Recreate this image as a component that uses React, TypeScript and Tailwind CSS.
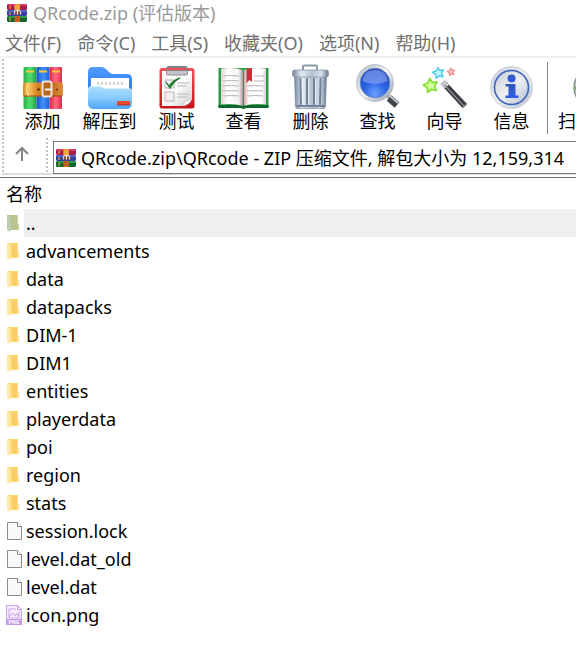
import type { ReactNode } from 'react';

function ArchiveIcon({ className }: { className: string }) {
  return (
    <svg className={className} viewBox="0 0 40 42" preserveAspectRatio="none" aria-hidden="true">
      <defs>
        <linearGradient id="bookGreen">
          <stop offset="0" stopColor="#2fae4a" />
          <stop offset=".5" stopColor="#4fe070" />
          <stop offset="1" stopColor="#1f9f40" />
        </linearGradient>
        <linearGradient id="bookBlue">
          <stop offset="0" stopColor="#1d50c8" />
          <stop offset=".5" stopColor="#3f94fa" />
          <stop offset="1" stopColor="#2560dc" />
        </linearGradient>
        <linearGradient id="bookRed">
          <stop offset="0" stopColor="#e02446" />
          <stop offset=".5" stopColor="#ff6f7f" />
          <stop offset="1" stopColor="#dc2a4a" />
        </linearGradient>
        <linearGradient id="strap">
          <stop offset="0" stopColor="#d98a2c" />
          <stop offset=".15" stopColor="#f7c660" />
          <stop offset=".35" stopColor="#d98425" />
          <stop offset=".7" stopColor="#c06a1c" />
          <stop offset="1" stopColor="#de8f3a" />
        </linearGradient>
      </defs>
      <rect x="0.5" width="13" height="42" rx="1" fill="url(#bookGreen)" />
      <rect x="13.5" width="13" height="42" rx="1" fill="url(#bookBlue)" />
      <rect x="26.5" width="12.5" height="42" rx="1" fill="url(#bookRed)" />
      <path d="M3 4.5h8M16 4.5h8M29 4.5h8" stroke="#f7c744" strokeWidth="2" />
      <rect y="15.500" width="40" height="14" rx="2" fill="url(#strap)" />
      <path d="M1 29h38" stroke="#8f4a12" strokeWidth="1" />
      <path d="M5.500 16q-4 6.500 0 13" fill="none" stroke="#ffe49a" strokeWidth="1.200" />
      <rect x="19.500" y="14.500" width="9" height="15" rx="2" fill="#b8691f" stroke="#e9e4dc" strokeWidth="2" />
      <path d="M22 22.500h6" stroke="#f7f7f7" strokeWidth="2" />
      <circle cx="15.500" cy="22.500" r="1.200" fill="#4b2507" />
      <circle cx="34" cy="22.500" r="1" fill="#6d390d" />
    </svg>
  );
}

function StackIcon({ className }: { className: string }) {
  return (
    <svg className={className} viewBox="0 0 20 18" aria-hidden="true">
      <path d="M1 0h18l1 1v4l-1 1H1L0 5V1z" fill="#a81c4c" />
      <path d="M2 0h17l1 1v1H1z" fill="#d33a63" />
      <path d="M1 6h18l1 1v4l-1 1H1l-1-1V7z" fill="#3a3f9c" />
      <path d="M2 6h17l1 1v1H1z" fill="#5563c8" />
      <path d="M1 12h18l1 1v4l-1 1H1l-1-1v-4z" fill="#14652d" />
      <path d="M2 12h17l1 1v1H1z" fill="#2c9a4b" />
      <path d="M3 2v3M3 8v3M3 14v3" fill="none" stroke="#f3b52c" strokeWidth="1.100" />
      <path d="M7.500 0h5.500v7h-5.500zM7.500 12h5.500v6H7.500z" fill="#c86a22" />
      <path d="M7.500 1q2.500-2 5.500 0v5H7.500z" fill="#efa53c" />
      <path d="M7.500 10.500v-3q3-2.500 6 0v3" fill="#8a3f1c" stroke="#d3d7df" strokeWidth="1.200" />
      <path d="M10.500 6v4.500" stroke="#fff" strokeWidth="1.200" />
      <path d="M8 13.500h4.500M8 16h4.500" stroke="#9a4d16" strokeWidth=".800" />
    </svg>
  );
}

function ExtractIcon() {
  return (
    <svg className="h-[43px] w-[46px]" viewBox="0 0 46 43" aria-hidden="true">
      <defs>
        <linearGradient id="folderBack" x2="0" y2="1">
          <stop offset="0" stopColor="#4f9dff" />
          <stop offset="1" stopColor="#2869ee" />
        </linearGradient>
        <linearGradient id="folderFront" x2="0" y2="1">
          <stop offset="0" stopColor="#a9defe" />
          <stop offset=".5" stopColor="#8accfc" />
          <stop offset="1" stopColor="#4fa4f6" />
        </linearGradient>
      </defs>
      <path d="M1 6q0-5 5-5h8q3 0 5 2l3 3q2 2 4 2h14q5 0 5 5v20H1z" fill="url(#folderBack)" />
      <path d="M4 12h38v14H4z" fill="#fff" />
      <path d="M11 16v3m4-3v3m4-3v3m4-3v3m4-3v3m4-3v3m4-3v3" stroke="#c4c4c4" strokeWidth="1.500" />
      <path d="M1 24q0-4 4-4h7q2 0 3 1t3 1h23q4 0 4 4v11q0 6-6 6H7q-6 0-6-6z" fill="url(#folderFront)" />
      <path d="M1.500 24q0-3 3-3.500h7q2 0 3.500 1t3 1h23q3 0 4 3" fill="none" stroke="#d6f0ff" />
      <rect x="30" y="35" width="13" height="4" rx="1" fill="#ef4a27" />
      <path d="M30 39h13" stroke="#9e3038" />
    </svg>
  );
}

function TestIcon() {
  return (
    <svg className="h-[43px] w-[36px]" viewBox="0 0 36 43" aria-hidden="true">
      <defs>
        <linearGradient id="board" x2="0" y2="1">
          <stop offset="0" stopColor="#ee5257" />
          <stop offset="1" stopColor="#c4141b" />
        </linearGradient>
        <linearGradient id="sheet" x2="1" y2="1">
          <stop offset=".5" stopColor="#fcfcfc" />
          <stop offset="1" stopColor="#cfcfcf" />
        </linearGradient>
      </defs>
      <rect x=".500" y="2" width="35" height="40.500" rx="2.500" fill="url(#board)" />
      <path d="M3 5h30v28q-2 6-9 7H3z" fill="url(#sheet)" />
      <path d="M33 32q-5 4-7 3 0 3-4 5 9-1 11-8z" fill="#fff" stroke="#b9b9b9" strokeWidth=".600" />
      <path d="M8 5V3q0-2 2-2h16q2 0 2 2v2" fill="none" stroke="#7e8287" strokeWidth="1.800" />
      <rect x="7.500" y="4.500" width="21" height="4.500" rx="1" fill="#c3c6ca" stroke="#777a80" strokeWidth=".800" />
      <path d="M6 14h9v8H6zM6 26h9v9H6z" fill="#f1f1f1" stroke="#b4b4b4" />
      <path d="M7 16l3 4q4-6 11-8-6 3-10 10z" fill="#238a35" stroke="#1d7b2d" strokeWidth="1.200" />
      <path d="M18 17h12M18 20h10M18 28h12M18 31h10" stroke="#b7b7b7" />
    </svg>
  );
}

function ViewIcon() {
  return (
    <svg className="h-[43px] w-[51px]" viewBox="0 0 51 43" aria-hidden="true">
      <defs>
        <linearGradient id="pageLeft">
          <stop offset="0" stopColor="#d9d9d9" />
          <stop offset=".3" stopColor="#fff" />
          <stop offset=".8" stopColor="#f4f4f4" />
          <stop offset="1" stopColor="#9d9d9d" />
        </linearGradient>
        <linearGradient id="pageRight">
          <stop offset="0" stopColor="#b3b3b3" />
          <stop offset=".2" stopColor="#fafafa" />
          <stop offset=".8" stopColor="#fff" />
          <stop offset="1" stopColor="#d5d5d5" />
        </linearGradient>
      </defs>
      <path d="M.500 2h50v40H28q-2.500 1.500-5 0H.500z" fill="#2b9a42" />
      <path d="M.500 39h50v3H28q-2.500 1.500-5 0H.500z" fill="#0f672a" />
      <path d="M3 2.500Q16 1 25 4v36Q16 37 3 38.500z" fill="url(#pageLeft)" />
      <path d="M48 2.500Q35 1 26 4v36q9-3 22-1.500z" fill="url(#pageRight)" />
      <path d="M5 10q9-1 16 0M5 15q9-1 16 0M5 20q9-1 16 0M5 25q9-1 16 0M5 30q9-1 16 0M29 20q9-1 16 0M29 25q9-1 16 0M29 30q9-1 16 0M36 10h10M36 15h10" fill="none" stroke="#b5b5b5" />
      <path d="M28.500 3q3-1 5.500-1v14l-2.500-2-3 3z" fill="#c92d35" />
    </svg>
  );
}

function DeleteIcon() {
  return (
    <svg className="h-[45px] w-[37px]" viewBox="0 0 37 45" aria-hidden="true">
      <defs>
        <linearGradient id="can">
          <stop offset="0" stopColor="#75879e" />
          <stop offset=".25" stopColor="#e3eaf1" />
          <stop offset=".55" stopColor="#b3c0cf" />
          <stop offset=".8" stopColor="#d7e0e9" />
          <stop offset="1" stopColor="#64778f" />
        </linearGradient>
      </defs>
      <path d="M11 6V2.500q0-1 1-1h12q1 0 1 1V6" fill="none" stroke="#8c9aaa" strokeWidth="2" />
      <path d="M2.500 12h32l-1 30q0 2.500-2.500 2.500H6q-2.500 0-2.500-2.500z" fill="url(#can)" stroke="#6d7e93" strokeWidth=".600" />
      <path d="M8.500 15l.500 25M15 15v25M22 15v25M28.500 15L28 40" stroke="#708196" strokeWidth="2" strokeLinecap="round" />
      <path d="M10 15l.500 25M16.500 15v25M23.500 15v25" stroke="#eef3f7" strokeWidth=".800" />
      <path d="M5 42h27" stroke="#596a7f" strokeWidth="1.500" />
      <rect x=".500" y="6" width="36" height="7" rx="2" fill="url(#can)" stroke="#8191a4" strokeWidth=".700" />
    </svg>
  );
}

function FindIcon() {
  return (
    <svg className="h-[45px] w-[46px]" viewBox="0 0 46 45" aria-hidden="true">
      <defs>
        <radialGradient id="lens" cx=".5" cy=".85" r=".85">
          <stop offset="0" stopColor="#6ea2ff" />
          <stop offset=".45" stopColor="#2b64e6" />
          <stop offset="1" stopColor="#2448b8" />
        </radialGradient>
        <linearGradient id="rim" x2="1" y2="1">
          <stop offset="0" stopColor="#a8b2bd" />
          <stop offset=".5" stopColor="#f3f5f7" />
          <stop offset="1" stopColor="#8b97a5" />
        </linearGradient>
      </defs>
      <path d="M31 30l4 4" stroke="#a6adb5" strokeWidth="4" />
      <path d="M34 34l8 7" stroke="#41454c" strokeWidth="7" />
      <path d="M35 32l8 7" stroke="#c5c8cc" strokeWidth="2" />
      <circle cx="20" cy="19" r="18.500" fill="url(#rim)" stroke="#a2abb5" strokeWidth=".600" />
      <circle cx="20" cy="19" r="14.800" fill="url(#lens)" stroke="#6c83b5" strokeWidth=".700" />
      <path d="M7.500 17Q9 6 20 6t12.500 11Q20 23 7.500 17z" fill="#c2d3ff" fillOpacity=".4" />
    </svg>
  );
}

function WizardIcon() {
  return (
    <svg className="h-[43px] w-[45px]" viewBox="0 0 45 43" aria-hidden="true">
      <path d="M18.500 18l4.500-3.500 22 23.500-4.500 4z" fill="#393b40" />
      <path d="M18.500 18l4.500-3.500 4 4.500-4.500 3.500z" fill="#c9cbce" />
      <path d="M22.500 19l20 21.500" stroke="#8d9095" strokeWidth="1.200" />
      <path d="M40.500 41.500l4.500-4" stroke="#77797d" strokeWidth="1.500" />
      <path d="M8 12.500l2.200 4 4.800-.500-2.500 4.200 1.800 4.300-4.800-1.200-3.800 3-.400-4.800-4-2.500 4.500-1.800z" fill="#d8fb9b" stroke="#84e234" strokeWidth="1.800" strokeLinejoin="round" />
      <path d="M16 1.500l1.700 3 3.800-.600-2 3.400 1.500 3.500-3.800-1-3 2.400-.400-3.900-3.300-2 3.800-1.300z" fill="#c1f5ff" stroke="#4cccea" strokeWidth="1.500" strokeLinejoin="round" />
      <path d="M29 2l1 2.200 2.500-.200-1.500 2.200 1 2.400-2.500-.700-2 1.500-.200-2.500-2-1.400 2.400-.900z" fill="#ffc9c9" stroke="#f08484" strokeWidth="1.100" strokeLinejoin="round" />
    </svg>
  );
}

function InfoIcon() {
  return (
    <svg className="h-[43px] w-[43px]" viewBox="0 0 43 43" aria-hidden="true">
      <defs>
        <linearGradient id="disc" x2="1" y2="1">
          <stop offset="0" stopColor="#c3cad6" />
          <stop offset=".5" stopColor="#eef0f5" />
          <stop offset="1" stopColor="#b5becd" />
        </linearGradient>
        <linearGradient id="glyph" x2="0" y2="1">
          <stop offset="0" stopColor="#3359b4" />
          <stop offset="1" stopColor="#2e5df0" />
        </linearGradient>
      </defs>
      <circle cx="21.500" cy="21.500" r="21" fill="url(#disc)" stroke="#c0c7d3" strokeWidth=".700" />
      <circle cx="21.500" cy="21.500" r="17" fill="url(#disc)" stroke="#3c62b8" strokeWidth="1.600" />
      <circle cx="21.500" cy="12.500" r="4" fill="url(#glyph)" />
      <path d="M15.500 18h10v11.500h3V32h-13v-2.500h3V20.500h-3z" fill="url(#glyph)" />
    </svg>
  );
}

function ScanIcon() {
  return (
    <svg className="h-[43px] w-[43px]" viewBox="0 0 43 43" aria-hidden="true">
      <circle cx="21.500" cy="21.500" r="20.500" fill="#c5c9cc" stroke="#8b9297" strokeWidth="1.500" />
      <circle cx="21.500" cy="21.500" r="18.500" fill="#7e868b" />
      <ellipse cx="20" cy="22" rx="18" ry="9" fill="#62c322" />
    </svg>
  );
}

function FolderIcon({ up }: { up?: boolean }) {
  return (
    <svg className="ml-[7px] block h-[18px] w-3" viewBox="0 0 12 18" aria-hidden="true">
      <path d="M0 1h10.500v9H12v6H0z" fill={up ? '#b7c391' : '#ffda78'} />
      <path d="M5 1h5.500v14H5z" fill={up ? '#b9c48f' : '#f8cf66'} />
      <path d="M0 1l3.500 2.500V18L0 16z" fill={up ? '#bccfb4' : '#ffe9a7'} />
      <path d="M10 10h2v6h-2z" fill={up ? '#c3cc9c' : '#ffe08a'} />
    </svg>
  );
}

function PageIcon() {
  return (
    <svg className="ml-[7px] block h-[18px] w-[15px]" viewBox="0 0 15 18" aria-hidden="true">
      <path d="M.500.500h10l4 4v13H.500z" fill="#f8f9fa" stroke="#8b8b8b" />
      <path d="M10.500.500v4h4" fill="#fff" stroke="#8b8b8b" />
    </svg>
  );
}

function PngIcon() {
  return (
    <svg className="ml-1.5 block h-5 w-4" viewBox="0 0 16 20" aria-hidden="true">
      <path d="M.500.500h11l4 4v15H.500z" fill="#f7effd" stroke="#c9a3ea" />
      <path d="M11.500.500v4h4" fill="none" stroke="#c9a3ea" />
      <path d="M3 4h7M3 4v9h10V6" fill="none" stroke="#c9a3ea" />
      <path d="M3.500 11.500l3-3.500 2.500 2.500 2-2 2 3" fill="none" stroke="#b98be0" />
      <path d="M0 14h16v6H0z" fill="#c59be8" />
      <text x="8" y="19" textAnchor="middle" fontSize="5" fontWeight="700" fill="#fff">PNG</text>
    </svg>
  );
}

const menus = ['文件(F)', '命令(C)', '工具(S)', '收藏夹(O)', '选项(N)', '帮助(H)'];

const tools: { label: string; icon: ReactNode }[] = [
  { label: '添加', icon: <ArchiveIcon className="h-[42px] w-10" /> },
  { label: '解压到', icon: <ExtractIcon /> },
  { label: '测试', icon: <TestIcon /> },
  { label: '查看', icon: <ViewIcon /> },
  { label: '删除', icon: <DeleteIcon /> },
  { label: '查找', icon: <FindIcon /> },
  { label: '向导', icon: <WizardIcon /> },
  { label: '信息', icon: <InfoIcon /> },
];

const folders = ['advancements', 'data', 'datapacks', 'DIM-1', 'DIM1', 'entities', 'playerdata', 'poi', 'region', 'stats'];
const files = ['session.lock', 'level.dat_old', 'level.dat', 'icon.png'];

const entries: { name: string; icon: ReactNode }[] = [
  { name: '..', icon: <FolderIcon up /> },
  ...folders.map((name) => ({ name, icon: <FolderIcon /> })),
  ...files.map((name) => ({ name, icon: name.endsWith('.png') ? <PngIcon /> : <PageIcon /> })),
];

function Grip() {
  return (
    <span
      aria-hidden="true"
      className="w-0.5 shrink-0 self-stretch bg-[repeating-linear-gradient(to_bottom,#c3c3c3_0px,#c3c3c3_2px,transparent_2px,transparent_4px)]"
    />
  );
}

function ToolButton({ label, icon, wide }: { label: string; icon: ReactNode; wide?: boolean }) {
  return (
    <button
      type="button"
      className={`flex shrink-0 flex-col items-center whitespace-nowrap ${wide ? 'w-[90px]' : 'w-[67px]'}`}
    >
      <span className="flex h-[50px] items-end">{icon}</span>
      <span className="leading-6">{label}</span>
    </button>
  );
}

export default function App() {
  return (
    <main className="w-full overflow-hidden bg-white font-['Noto_Sans','Noto_Sans_CJK_SC',sans-serif] text-lg text-black">
      <header className="flex h-[26px] items-center gap-1.5 pl-[7px] text-[#999]">
        <StackIcon className="h-[18px] w-5" />
        <h1 className="whitespace-nowrap leading-6">QRcode.zip (评估版本)</h1>
      </header>

      <nav className="flex h-[32px] gap-4 border-b-2 border-[#f0f0f0] pt-1 pl-[5px] text-[#707070]">
        {menus.map((menu) => (
          <button key={menu} type="button" className="whitespace-nowrap leading-[26px]">
            {menu}
          </button>
        ))}
      </nav>

      <div className="flex h-20 items-start overflow-hidden pt-px pl-0.5">
        <Grip />
        <div className="flex pl-[5px]">
          {tools.map((tool) => (
            <ToolButton key={tool.label} label={tool.label} icon={tool.icon} />
          ))}
        </div>
        <span className="mt-[3px] mr-px ml-0.5 h-[72px] w-px shrink-0 bg-[#8a8a8a]" />
        <ToolButton label="扫描病毒" icon={<ScanIcon />} wide />
      </div>

      <div className="flex h-10 items-start border-b border-[#70737c] pl-0.5">
        <div className="flex h-[37px] w-full border-b-2 border-[#dcdcdc]">
          <Grip />
          <button type="button" aria-label="向上" className="flex w-[42px] items-center justify-center pr-1.5 pb-1">
            <svg className="h-4 w-4" viewBox="0 0 16 16" fill="none" stroke="#858585" strokeWidth="2" aria-hidden="true">
              <path d="M8 15V2M2 8l6-6 6 6" />
            </svg>
          </button>
          <Grip />
          <label className="mt-[3px] ml-[5px] flex h-[33px] grow items-center gap-[5px] border border-r-0 border-[#7a7a7a] pl-0.5">
            <StackIcon className="h-[18px] w-5 shrink-0" />
            <input
              type="text"
              aria-label="路径"
              className="w-full min-w-0 outline-none"
              defaultValue={'QRcode.zip\\QRcode - ZIP 压缩文件, 解包大小为 12,159,314'}
            />
          </label>
        </div>
      </div>

      <table className="w-full border-collapse text-left">
        <thead>
          <tr className="h-[31px]">
            <th colSpan={2} className="p-0 pl-1.5 leading-[26px] font-normal">
              名称
            </th>
          </tr>
        </thead>
        <tbody>
          {entries.map((entry, index) => (
            <tr key={entry.name} className="h-7">
              <td className="w-6 p-0">{entry.icon}</td>
              <td className={`p-0 pl-0.5 leading-7 ${index === 0 ? 'bg-[#efefef]' : ''}`}>{entry.name}</td>
            </tr>
          ))}
        </tbody>
      </table>
    </main>
  );
}
